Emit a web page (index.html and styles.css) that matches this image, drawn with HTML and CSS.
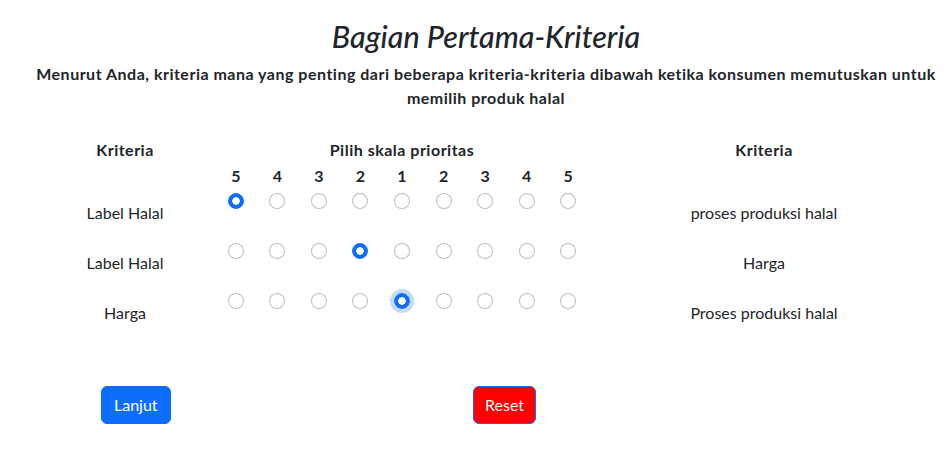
FILE: index.html
```html
<!DOCTYPE html>
<html lang="id">
<head>
<meta charset="utf-8">
<title>Bagian Pertama-Kriteria</title>
<link rel="stylesheet" href="styles.css">
</head>
<body>
<main class="page">
  <h1 class="title">Bagian Pertama-Kriteria</h1>
  <p class="subtitle">Menurut Anda, kriteria mana yang penting dari beberapa kriteria-kriteria dibawah ketika konsumen memutuskan untuk memilih produk halal</p>
</main>
<form class="survey">
  <div class="row head">
    <div class="cell">Kriteria</div>
    <div class="cell">Pilih skala prioritas</div>
    <div class="cell">Kriteria</div>
  </div>
  <div class="row nums">
    <div class="cell"></div>
    <div class="scale">
      <span>5</span><span>4</span><span>3</span><span>2</span><span>1</span><span>2</span><span>3</span><span>4</span><span>5</span>
    </div>
    <div class="cell"></div>
  </div>
  <div class="row item">
    <div class="cell">Label Halal</div>
    <div class="scale">
      <input type="radio" name="q1" checked><input type="radio" name="q1"><input type="radio" name="q1"><input type="radio" name="q1"><input type="radio" name="q1"><input type="radio" name="q1"><input type="radio" name="q1"><input type="radio" name="q1"><input type="radio" name="q1">
    </div>
    <div class="cell">proses produksi halal</div>
  </div>
  <div class="row item">
    <div class="cell">Label Halal</div>
    <div class="scale">
      <input type="radio" name="q2"><input type="radio" name="q2"><input type="radio" name="q2"><input type="radio" name="q2" checked><input type="radio" name="q2"><input type="radio" name="q2"><input type="radio" name="q2"><input type="radio" name="q2"><input type="radio" name="q2">
    </div>
    <div class="cell">Harga</div>
  </div>
  <div class="row item">
    <div class="cell">Harga</div>
    <div class="scale">
      <input type="radio" name="q3"><input type="radio" name="q3"><input type="radio" name="q3"><input type="radio" name="q3"><input type="radio" name="q3" class="focused" checked><input type="radio" name="q3"><input type="radio" name="q3"><input type="radio" name="q3"><input type="radio" name="q3">
    </div>
    <div class="cell">Proses produksi halal</div>
  </div>
  <div class="actions">
    <button type="button" class="btn btn-primary">Lanjut</button>
    <button type="button" class="btn btn-danger">Reset</button>
  </div>
</form>
</body>
</html>
```

FILE: styles.css
```css
* { box-sizing: border-box; }
body {
  margin: 0;
  font-family: "Lato", "Open Sans", sans-serif;
  font-size: 16px;
  line-height: 1.5;
  color: #212529;
  background: #fff;
}
.page {
  padding-left: 25px;
  text-align: center;
}
.title {
  margin: 0;
  padding-top: 18px;
  font-size: 30.5px;
  font-style: italic;
  font-weight: 500;
  line-height: 36px;
}
.subtitle {
  margin: 8px 0 0;
  padding: 0;
  font-weight: 700;
  line-height: 24px;
  letter-spacing: 0.5px;
}
.survey {
  margin: 28px 0 0 35px;
}
.row {
  display: grid;
  grid-template-columns: 180px 374px 350px;
  text-align: center;
}
.head { height: 26px; font-weight: 700; letter-spacing: 0.5px; }
.nums { height: 24px; font-weight: 700; }
.scale {
  display: grid;
  grid-template-columns: repeat(9, 1fr);
  justify-items: center;
}
.item { height: 50px; }
.item .cell { align-self: center; }
.item .scale { align-items: start; padding-top: 5px; }
input[type="radio"] {
  appearance: none;
  -webkit-appearance: none;
  width: 16px;
  height: 16px;
  margin: 0;
  border: 1px solid rgba(0, 0, 0, 0.25);
  border-radius: 50%;
  background: #fff;
}
input[type="radio"]:checked {
  border-color: #0d6efd;
  background: radial-gradient(circle, #fff 0 3.5px, #0d6efd 4px);
}
input[type="radio"].focused {
  box-shadow: 0 0 0 4px rgba(13, 110, 253, 0.25);
}
.actions {
  display: grid;
  grid-template-columns: 372px auto;
  justify-content: start;
  margin: 48px 0 0 66px;
}
.btn {
  justify-self: start;
  font-family: inherit;
  font-size: 16px;
  line-height: 24px;
  padding: 6px 12px;
  border-radius: 6px;
  border: 1px solid #0d6efd;
  color: #fff;
}
.btn-primary { background: #0d6efd; }
.btn-danger { background: #ff0000; padding: 6px 11px; }
```
